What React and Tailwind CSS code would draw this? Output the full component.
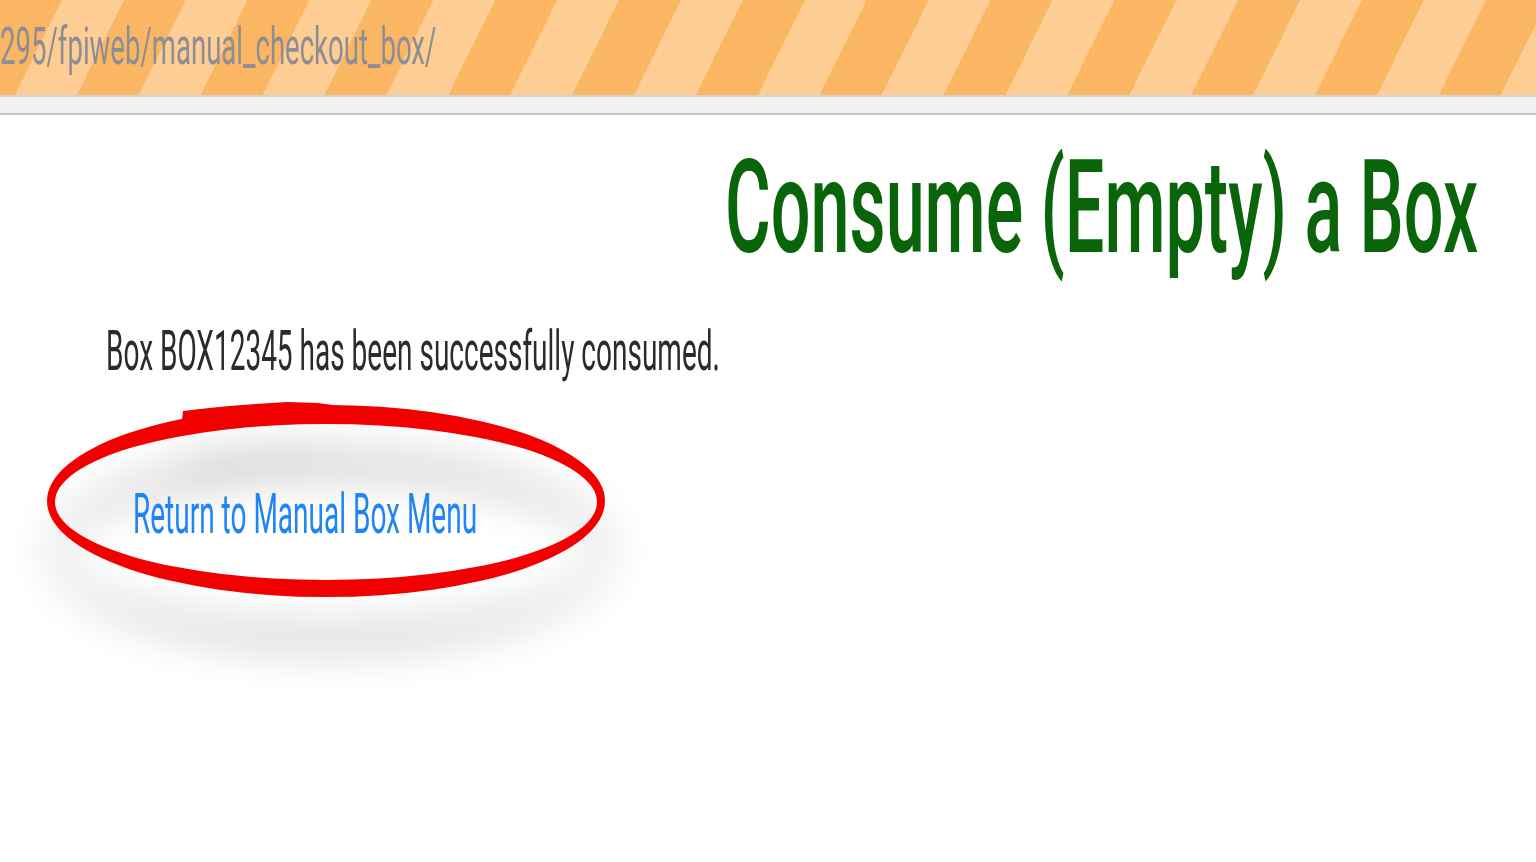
export default function App() {
  return (
    <div className="min-h-screen bg-white overflow-hidden font-['Roboto',_'Liberation_Sans',_sans-serif]">
      {/* address bar stripe */}
      <header className="h-[95px] overflow-hidden bg-[repeating-linear-gradient(116.3deg,#fbb664_0px,#fbb664_55.5px,#fdcd93_55.5px,#fdcd93_111px)]">
        <div className="pt-[21px]">
          <span className="inline-block origin-left scale-x-[0.53] whitespace-nowrap text-[52px] leading-none text-[#8d8e95]">
            295/fpiweb/manual_checkout_box/
          </span>
        </div>
      </header>
      <div className="h-[20px] border-t-2 border-b-2 border-t-[#d3d3d3] border-b-[#c6c6c6] bg-[#f1f1ef]" />

      <main className="pt-[28px]">
        <div className="flex justify-end pr-[58px]">
          <h1 className="inline-block origin-right scale-x-[0.539] whitespace-nowrap text-[130px] leading-none font-medium text-[#0a650a]">
            Consume (Empty) a Box
          </h1>
        </div>

        <p className="mt-[50px] pl-[106px]">
          <span className="inline-block origin-left scale-x-[0.5] whitespace-nowrap text-[56px] leading-none text-[#2b2b2b]">
            Box BOX12345 has been successfully consumed.
          </span>
        </p>

        <div className="relative mt-[107px] pl-[133px]">
          {/* red marker annotation */}
          <svg
            className="pointer-events-none absolute left-0 top-[-106px] overflow-visible"
            width="720"
            height="360"
            viewBox="0 0 720 360"
          >
            <defs>
              <filter id="soft" x="-20%" y="-30%" width="140%" height="180%">
                <feGaussianBlur in="SourceAlpha" stdDeviation="22" />
                <feOffset dx="4" dy="50" result="b" />
                <feComponentTransfer>
                  <feFuncA type="linear" slope="0.28" />
                </feComponentTransfer>
                <feMerge>
                  <feMergeNode />
                  <feMergeNode in="SourceGraphic" />
                </feMerge>
              </filter>
            </defs>
            <g filter="url(#soft)">
              <path
                fillRule="evenodd"
                fill="#f20000"
                d="M47 121 A279 96 0 1 0 605 121 A279 96 0 1 0 47 121 Z M55 122 A271 78 0 1 1 597 122 A271 78 0 1 1 55 122 Z"
              />
              <path fill="#f20000" d="M176 44 L182 40 L183 31 Q230 25 287 22 L318 23 L340 26 L340 34 L176 50 Z" />
            </g>
          </svg>
          <a href="#" className="relative inline-block origin-left scale-x-[0.5] whitespace-nowrap text-[56px] leading-none text-[#1f84f5]">
            Return to Manual Box Menu
          </a>
        </div>
      </main>
    </div>
  );
}
